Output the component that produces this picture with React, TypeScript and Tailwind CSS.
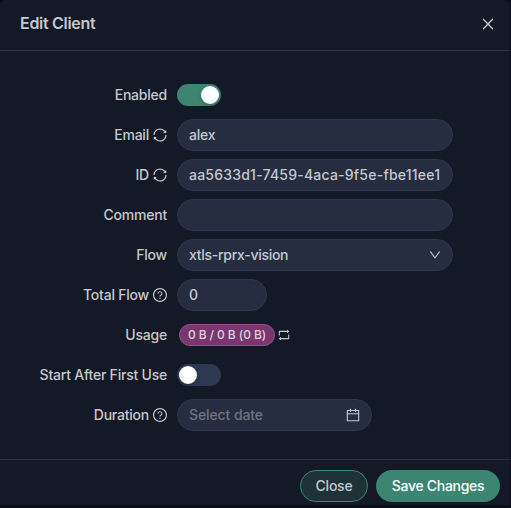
import type { ReactNode } from "react";
import {
  AiOutlineCalendar,
  AiOutlineClose,
  AiOutlineDown,
  AiOutlineQuestionCircle,
  AiOutlineRetweet,
  AiOutlineSync,
} from "react-icons/ai";
import clsx from "clsx";

interface FieldProps {
  label: string;
  icon?: ReactNode;
  children: ReactNode;
}

function Field({ label, icon, children }: FieldProps) {
  return (
    <div className="flex h-10 items-center">
      <label className="flex w-[167px] shrink-0 items-center justify-end whitespace-nowrap">
        {label}
        {icon && <span className="-mr-px ml-[3px]">{icon}</span>}
      </label>
      <div className="ml-2.5 flex items-center">{children}</div>
    </div>
  );
}

function Box({ className, children }: { className?: string; children?: ReactNode }) {
  return (
    <div
      className={clsx(
        "flex h-8 items-center justify-between rounded-full border border-[#2c3950] bg-[#262d41] px-[11px] whitespace-nowrap",
        className,
      )}
    >
      {children}
    </div>
  );
}

function Toggle({ checked }: { checked?: boolean }) {
  return (
    <button
      role="switch"
      aria-checked={!!checked}
      className={clsx(
        "flex h-[22px] w-11 items-center rounded-full px-0.5",
        checked ? "justify-end bg-[#3c8570]" : "justify-start bg-[#2c3950]",
      )}
    >
      <span className="size-[18px] rounded-full bg-white shadow-[0_2px_4px_rgba(0,35,11,0.2)]" />
    </button>
  );
}

export default function App() {
  return (
    <div className="h-[508px] w-[511px] bg-[#0b0e19] pr-px pb-[3px] font-[Inter,sans-serif] text-sm font-[450] tracking-[-0.22px] text-[#c6c8cc]">
      <div className="flex h-full flex-col overflow-hidden rounded-t-md bg-[#141928]">
        <header className="flex h-[51px] shrink-0 items-center justify-between border-b border-[#2c3950] pr-[14px] pb-1 pl-5">
          <h1 className="text-base font-semibold tracking-[-0.3px]">Edit Client</h1>
          <button aria-label="Close" className="pt-0.5">
            <AiOutlineClose size={16} />
          </button>
        </header>

        <main className="flex-1 pt-6">
          <Field label="Enabled">
            <Toggle checked />
          </Field>
          <Field label="Email" icon={<AiOutlineSync size={16} />}>
            <Box className="w-[276px]">alex</Box>
          </Field>
          <Field label="ID" icon={<AiOutlineSync size={16} />}>
            <Box className="w-[276px]">
              <span className="tracking-[0.22px]">aa5633d1-7459-4aca-9f5e-fbe11ee1</span>
            </Box>
          </Field>
          <Field label="Comment">
            <Box className="w-[276px]" />
          </Field>
          <Field label="Flow">
            <Box className="w-[276px]">
              <span className="tracking-[-0.28px]">xtls-rprx-vision</span>
              <AiOutlineDown size={14} className="-mr-px" />
            </Box>
          </Field>
          <Field label="Total Flow" icon={<AiOutlineQuestionCircle size={16} />}>
            <Box className="w-[90px]">0</Box>
          </Field>
          <Field label="Usage">
            <span className="ml-0.5 flex h-[22px] w-24 items-center justify-center rounded-full border border-[#95528a] bg-[#7a376f] text-xs font-medium tracking-[-0.08px] whitespace-nowrap text-[#dfd0dd]">
              0 B / 0 B (0 B)
            </span>
            <AiOutlineRetweet size={14} className="ml-0.5" />
          </Field>
          <Field label="Start After First Use">
            <Toggle />
          </Field>
          <Field label="Duration" icon={<AiOutlineQuestionCircle size={16} />}>
            <Box className="w-[195px]">
              <span className="tracking-[-0.1px] text-[#6e7380]">Select date</span>
              <AiOutlineCalendar size={16} className="-mr-px" />
            </Box>
          </Field>
        </main>

        <footer className="flex h-[46px] shrink-0 justify-end gap-2 border-t border-[#2c3347] pt-2.5 pr-2.5">
          <button className="h-8 w-[68px] rounded-full border border-[#3c8570] bg-[#1e3238]">Close</button>
          <button className="h-8 w-[124px] rounded-full bg-[#3c8570] tracking-[-0.3px] whitespace-nowrap text-white">
            Save Changes
          </button>
        </footer>
      </div>
    </div>
  );
}
